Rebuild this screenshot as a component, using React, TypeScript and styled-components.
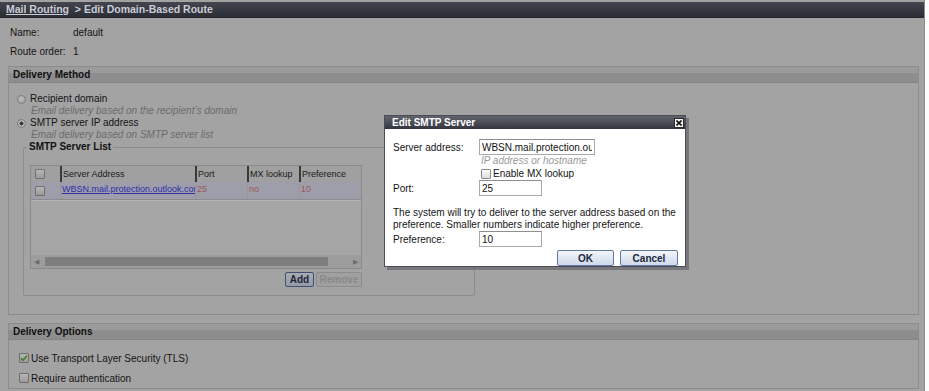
import styled, { createGlobalStyle } from 'styled-components';

const GlobalStyle = createGlobalStyle`
  html, body {
    margin: 0;
    padding: 0;
    background: #fdfdfd;
  }
  body {
    font-family: 'Liberation Sans', Arial, sans-serif;
    font-size: 10px;
    color: #141414;
  }
  * {
    box-sizing: border-box;
  }
`;

const SERVERS = [
    { address: 'WBSN.mail.protection.outlook.com', port: '25', mx: 'no', preference: '10' },
];

const Screen = styled.div`
    position: relative;
    width: 929px;
    height: 391px;
    overflow: hidden;
`;

const Page = styled.div`
    width: 925px;
    height: 391px;
    padding-top: 2px;
    background: #a3a3a3;
    border-right: 1px solid #8c8c8c;
`;

const TopBar = styled.div`
    height: 16px;
    padding-left: 6px;
    line-height: 15px;
    font-size: 10.5px;
    font-weight: bold;
    color: #c9ccd5;
    background: linear-gradient(to bottom, #43454f, #2c2e36);
    border-bottom: 1px solid #25262c;

    a {
        color: #c9ccd5;
        text-decoration: underline;
    }
`;

const Content = styled.div`
    padding: 5px 5px 0 8px;
`;

const InfoRow = styled.div`
    display: flex;
    align-items: center;
    height: 19px;
    padding-left: 2px;
`;

const InfoLabel = styled.span`
    width: 63px;
`;

const Panel = styled.section<{ $gap: number }>`
    margin-top: ${({ $gap }) => $gap}px;
    border: 1px solid #8b8b90;
    background: #a3a3a3;
`;

const PanelHeader = styled.div`
    height: 16px;
    padding-left: 4px;
    line-height: 15px;
    font-weight: bold;
    color: #111;
    background: linear-gradient(to bottom, #9b9b9b 0%, #9b9b9b 38%, #8e8e8e 42%, #8d8d8d 100%);
    border-bottom: 1px solid #858589;
`;

const PanelBody = styled.div<{ $height: number }>`
    height: ${({ $height }) => $height}px;
    padding: 10px 0 0 8px;
`;

const Option = styled.div`
    display: grid;
    grid-template-columns: 13px 1fr;
    align-items: center;
    margin-bottom: 1px;
`;

const OptionLabel = styled.span`
    line-height: 12px;
`;

const OptionHint = styled.span`
    grid-column: 2;
    padding-left: 1px;
    line-height: 11px;
    font-style: italic;
    color: #6b6b6b;
`;

const Radio = styled.span<{ $checked?: boolean }>`
    display: inline-block;
    width: 9px;
    height: 9px;
    border-radius: 50%;
    border: 1px solid #7c7c7c;
    background: ${({ $checked }) =>
        $checked
            ? 'radial-gradient(circle, #3b3b3b 0 1.8px, #b3b3b3 2.2px)'
            : 'radial-gradient(circle at 40% 35%, #bdbdbd, #9d9d9d)'};
`;

const ServerFieldset = styled.fieldset`
    width: 452px;
    margin: 1px 0 0 6px;
    padding: 12px 6px 8px 6px;
    border: 1px solid #8d8d8d;
    border-radius: 2px;
`;

const Legend = styled.legend`
    margin-left: -3px;
    padding: 0 2px;
    font-weight: bold;
    line-height: 12px;
    color: #111;
`;

const ServerGrid = styled.div`
    display: flex;
    flex-direction: column;
    width: 332px;
    height: 104px;
    border: 1px solid #8a8a8a;
    background: #a5a5a5;
    font-size: 9px;
`;

const GridRow = styled.div<{ $head?: boolean }>`
    display: grid;
    grid-template-columns: 29px 135px 52px 52px 1fr;
    height: ${({ $head }) => ($head ? 16 : 18)}px;
    background: ${({ $head }) => ($head ? '#a0a0a0' : '#9e9eab')};
    border-bottom: ${({ $head }) => ($head ? 'none' : '1px solid #8c8c8f')};
`;

const GridCell = styled.div<{ $head?: boolean; $tone?: 'link' | 'red' }>`
    display: flex;
    align-items: ${({ $head }) => ($head ? 'center' : 'flex-start')};
    min-width: 0;
    padding: ${({ $head }) => ($head ? '0 0 0 1px' : '1px 0 0 1px')};
    line-height: 12px;
    overflow: hidden;
    white-space: nowrap;
    color: ${({ $tone }) => ($tone === 'link' ? '#2f2fa8' : $tone === 'red' ? '#9c5858' : '#1a1a1a')};
    border-left: ${({ $head }) => ($head ? '2px solid #3a3a3a' : '1px solid #979797')};

    &:first-child {
        border-left: none;
        align-items: center;
        padding: 0 0 0 4px;
    }
`;

const GridLink = styled.a`
    display: block;
    min-width: 0;
    overflow: hidden;
    color: inherit;
    text-decoration: underline;
`;

const GridFill = styled.div`
    flex: 1;
    border-top: 1px solid #b2b2b2;
`;

const HScroll = styled.div`
    display: flex;
    align-items: center;
    height: 13px;
    padding: 0 3px;
    background: #9d9d9d;
    color: #6e6e6e;
    font-size: 7px;
`;

const ScrollThumb = styled.div`
    height: 9px;
    margin: 0 25px 0 6px;
    flex: 1;
    background: #7e7e7e;
`;

const ButtonBar = styled.div`
    display: flex;
    justify-content: flex-end;
    gap: 2px;
    width: 332px;
    margin-top: 3px;
`;

const PageButton = styled.button<{ $width: number }>`
    width: ${({ $width }) => $width}px;
    height: 15px;
    padding: 0;
    font: bold 10px 'Liberation Sans', Arial, sans-serif;
    border-radius: 2px;
    color: #1e2639;
    border: 1px solid #3f5071;
    background: linear-gradient(to bottom, #a8abb2, #939aa7);

    &:disabled {
        color: #898989;
        border-color: #8c8c8c;
        background: #a0a0a0;
    }
`;

const OptionsList = styled.div`
    display: flex;
    flex-direction: column;
    padding: 8px 0 0 10px;
`;

const CheckOption = styled.label`
    display: flex;
    align-items: center;
    gap: 2px;
    height: 20px;
`;

const Box = styled.span<{ $light?: boolean }>`
    display: inline-flex;
    align-items: center;
    justify-content: center;
    flex-shrink: 0;
    width: 10px;
    height: 10px;
    border: 1px solid ${({ $light }) => ($light ? '#8a8a8a' : '#6f6f6f')};
    border-radius: 1px;
    background: ${({ $light }) =>
        $light ? 'linear-gradient(to bottom, #fbfbfb, #dedede)' : 'linear-gradient(to bottom, #b6b6b6, #9b9b9b)'};
`;

const Dialog = styled.div`
    position: absolute;
    left: 384px;
    top: 115px;
    width: 302px;
    height: 152px;
    background: #fff;
    border: 1px solid #4b4d56;
    box-shadow: 3px 3px 0 #77777c;
`;

const DialogTitle = styled.div`
    display: flex;
    align-items: center;
    justify-content: space-between;
    height: 13px;
    padding: 0 1px 0 7px;
    font-weight: bold;
    color: #fff;
    background: linear-gradient(to bottom, #62656f, #33353e);
`;

const CloseButton = styled.span`
    display: inline-flex;
    align-items: center;
    justify-content: center;
    width: 10px;
    height: 10px;
    background: #f4f4f4;
    border: 1px solid #2a2a2a;
`;

const DialogBody = styled.div`
    padding: 10px 7px 0 8px;
`;

const FieldRow = styled.div`
    display: grid;
    grid-template-columns: 86px 1fr;
    align-items: center;
`;

const FieldLabel = styled.span`
    color: #151515;
`;

const TextInput = styled.input<{ $width: number }>`
    width: ${({ $width }) => $width}px;
    height: 16px;
    padding: 0 2px;
    font: 10px 'Liberation Sans', Arial, sans-serif;
    color: #111;
    border: 1px solid #a9a9a9;
    border-top-color: #8f8f8f;
    outline: none;
`;

const FieldHint = styled.div`
    padding-left: 88px;
    line-height: 12px;
    font-style: italic;
    color: #9a9a9a;
`;

const FieldCheck = styled.label`
    display: flex;
    align-items: center;
    gap: 2px;
    height: 13px;
    padding-left: 88px;
`;

const Note = styled.p`
    margin: 11px 0 0;
    line-height: 12px;
    color: #151515;
`;

const DialogButtons = styled.div`
    display: flex;
    justify-content: flex-end;
    gap: 6px;
    margin-top: 3px;
`;

const DialogButton = styled.button<{ $width: number }>`
    width: ${({ $width }) => $width}px;
    height: 16px;
    padding: 0;
    font: bold 10px 'Liberation Sans', Arial, sans-serif;
    color: #1c2740;
    border: 1px solid #6078a2;
    border-radius: 2px;
    background: linear-gradient(to bottom, #f3f6fb, #cfd9ea);
`;

const CheckMark = () => (
    <svg width="8" height="8" viewBox="0 0 8 8">
        <path d="M1 4.2 L3.1 6.3 L7 1.5" fill="none" stroke="#3f7f2c" strokeWidth="1.5" />
    </svg>
);

const CloseIcon = () => (
    <svg width="6" height="6" viewBox="0 0 6 6">
        <path d="M0.5 0.5 L5.5 5.5 M5.5 0.5 L0.5 5.5" stroke="#111" strokeWidth="1.6" />
    </svg>
);

const App = () => {
    return (
        <Screen>
            <GlobalStyle />
            <Page>
                <TopBar>
                    <a>Mail Routing</a> &nbsp;&gt; Edit Domain-Based Route
                </TopBar>
                <Content>
                    <InfoRow>
                        <InfoLabel>Name:</InfoLabel>
                        <span>default</span>
                    </InfoRow>
                    <InfoRow>
                        <InfoLabel>Route order:</InfoLabel>
                        <span>1</span>
                    </InfoRow>

                    <Panel $gap={5}>
                        <PanelHeader>Delivery Method</PanelHeader>
                        <PanelBody $height={231}>
                            <Option>
                                <Radio />
                                <OptionLabel>Recipient domain</OptionLabel>
                                <OptionHint>Email delivery based on the recipient’s domain</OptionHint>
                            </Option>
                            <Option>
                                <Radio $checked />
                                <OptionLabel>SMTP server IP address</OptionLabel>
                                <OptionHint>Email delivery based on SMTP server list</OptionHint>
                            </Option>
                            <ServerFieldset>
                                <Legend>SMTP Server List</Legend>
                                <ServerGrid>
                                    <GridRow $head>
                                        <GridCell $head>
                                            <Box />
                                        </GridCell>
                                        <GridCell $head>Server Address</GridCell>
                                        <GridCell $head>Port</GridCell>
                                        <GridCell $head>MX lookup</GridCell>
                                        <GridCell $head>Preference</GridCell>
                                    </GridRow>
                                    {SERVERS.map((s) => (
                                        <GridRow key={s.address}>
                                            <GridCell>
                                                <Box />
                                            </GridCell>
                                            <GridCell $tone="link">
                                                <GridLink>{s.address}</GridLink>
                                            </GridCell>
                                            <GridCell $tone="red">{s.port}</GridCell>
                                            <GridCell $tone="red">{s.mx}</GridCell>
                                            <GridCell $tone="red">{s.preference}</GridCell>
                                        </GridRow>
                                    ))}
                                    <GridFill />
                                    <HScroll>
                                        <span>◀</span>
                                        <ScrollThumb />
                                        <span>▶</span>
                                    </HScroll>
                                </ServerGrid>
                                <ButtonBar>
                                    <PageButton type="button" $width={29}>
                                        Add
                                    </PageButton>
                                    <PageButton type="button" $width={46} disabled>
                                        Remove
                                    </PageButton>
                                </ButtonBar>
                            </ServerFieldset>
                        </PanelBody>
                    </Panel>

                    <Panel $gap={8}>
                        <PanelHeader>Delivery Options</PanelHeader>
                        <OptionsList>
                            <CheckOption>
                                <Box>
                                    <CheckMark />
                                </Box>
                                Use Transport Layer Security (TLS)
                            </CheckOption>
                            <CheckOption>
                                <Box />
                                Require authentication
                            </CheckOption>
                        </OptionsList>
                    </Panel>
                </Content>
            </Page>

            <Dialog>
                <DialogTitle>
                    Edit SMTP Server
                    <CloseButton>
                        <CloseIcon />
                    </CloseButton>
                </DialogTitle>
                <DialogBody>
                    <FieldRow>
                        <FieldLabel>Server address:</FieldLabel>
                        <TextInput $width={116} defaultValue="WBSN.mail.protection.outlook.com" readOnly />
                    </FieldRow>
                    <FieldHint>IP address or hostname</FieldHint>
                    <FieldCheck>
                        <Box $light />
                        Enable MX lookup
                    </FieldCheck>
                    <FieldRow>
                        <FieldLabel>Port:</FieldLabel>
                        <TextInput $width={63} defaultValue="25" readOnly />
                    </FieldRow>
                    <Note>
                        The system will try to deliver to the server address based on the preference. Smaller numbers
                        indicate higher preference.
                    </Note>
                    <FieldRow>
                        <FieldLabel>Preference:</FieldLabel>
                        <TextInput $width={63} defaultValue="10" readOnly />
                    </FieldRow>
                    <DialogButtons>
                        <DialogButton type="button" $width={57}>
                            OK
                        </DialogButton>
                        <DialogButton type="button" $width={58}>
                            Cancel
                        </DialogButton>
                    </DialogButtons>
                </DialogBody>
            </Dialog>
        </Screen>
    );
};

export default App;
